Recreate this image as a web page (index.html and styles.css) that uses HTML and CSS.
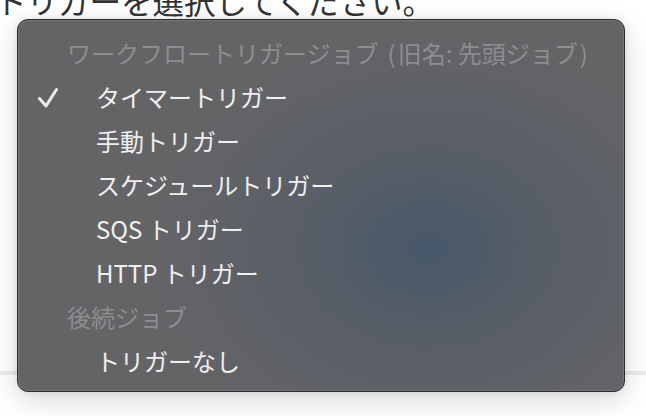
FILE: index.html
```html
<!DOCTYPE html>
<html lang="ja">
<head>
<meta charset="utf-8">
<link rel="stylesheet" href="styles.css">
</head>
<body>
<div class="page">
  <p class="prompt">トリガーを選択してください。</p>
  <div class="rule"></div>
</div>
<div class="menu">
  <div class="row header">ワークフロートリガージョブ<span class="paren open">(</span>旧名: 先頭ジョブ<span class="paren">)</span></div>
  <div class="row item">
    <span class="check-col">
      <svg class="check" width="20" height="22" viewBox="0 0 20 22"><path d="M1.5 12.5 L8 20 L18.5 3.5" fill="none" stroke="#ebebeb" stroke-width="3" stroke-linecap="round" stroke-linejoin="round"/></svg>
    </span>
    <span>タイマートリガー</span>
  </div>
  <div class="row item"><span class="check-col"></span><span>手動トリガー</span></div>
  <div class="row item"><span class="check-col"></span><span>スケジュールトリガー</span></div>
  <div class="row item"><span class="check-col"></span><span>SQS トリガー</span></div>
  <div class="row item"><span class="check-col"></span><span>HTTP トリガー</span></div>
  <div class="row header">後続ジョブ</div>
  <div class="row item"><span class="check-col"></span><span>トリガーなし</span></div>
</div>
</body>
</html>
```
FILE: styles.css
```css
html, body {
  margin: 0;
  padding: 0;
  background: #ffffff;
  overflow: hidden;
  width: 646px;
  height: 416px;
}
body {
  font-family: "Noto Sans CJK JP", "Noto Sans", sans-serif;
  position: relative;
}
.page {
  display: flex;
  flex-direction: column;
}
.prompt {
  margin: -20px 0 0 -5px;
  font-size: 31.5px;
  line-height: 40px;
  color: #333333;
  white-space: nowrap;
}
.rule {
  margin-top: 351px;
  height: 4px;
  background: #ececec;
}
.menu {
  position: absolute;
  left: 17px;
  top: 19px;
  width: 608px;
  height: 373px;
  box-sizing: border-box;
  padding: 10px 0 9px;
  border: 1px solid #2c2c2e;
  border-radius: 11px;
  background:
    radial-gradient(ellipse 270px 210px at 410px 228px, rgba(70, 87, 106, 0.95) 0%, rgba(80, 90, 103, 0.6) 45%, rgba(100, 100, 103, 0) 100%),
    #646467;
  box-shadow: inset 0 0 0 1px rgba(255, 255, 255, 0.12), 0 8px 28px rgba(0, 0, 0, 0.16), 0 0 6px rgba(0, 0, 0, 0.08);
  font-size: 24px;
}
.row {
  height: 44px;
  display: flex;
  align-items: center;
  white-space: nowrap;
}
.header {
  padding-left: 49px;
  color: #8d8d90;
}
.paren {
  margin: 0 2px;
}
.paren.open {
  margin-left: 9px;
}
.item {
  color: #efefef;
}
.check-col {
  width: 78px;
  flex: none;
  display: flex;
  align-items: center;
}
.check {
  margin-left: 20px;
  margin-top: 2px;
}
```
